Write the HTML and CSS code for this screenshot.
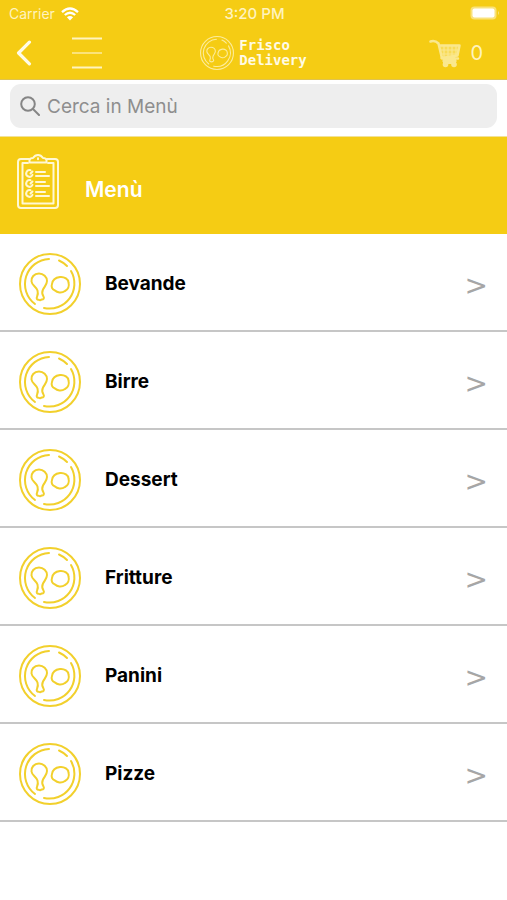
FILE: index.html
```html
<!DOCTYPE html>
<html lang="it">
<head>
    <meta charset="UTF-8">
    <meta name="viewport" content="width=device-width, initial-scale=1.0">
    <title>Menù - Frisco Delivery</title>
    <link rel="stylesheet" href="styles.css">
</head>
<body>
    <svg class="sprite" aria-hidden="true">
        <symbol id="plate" viewBox="0 0 62 62">
            <circle cx="31" cy="31" r="30"/>
            <path d="M30 6A25 25 0 0 0 16 51"/>
            <path d="M25 55A25 25 0 0 0 52 18"/>
            <path d="M40 7.500Q44.500 9.500 48 13"/>
            <path d="M20 20.500c-5 0-8 4-7.500 8 .5 4 4.500 5 6 9 .8 2.500.5 4-.5 6.500-.8 1.500 0 3 1.800 2.700 1 .8 2 .5 2.700-.2 2 .3 3-1.500 2-3-1.700-2.500-2-4-.5-7 1.500-3 4-5 4-8.500 0-4-3.500-7.500-8-7.500z"/>
            <path d="M41 24c4.500-.5 8.500 2.500 8.500 5.500 1 3.500-.5 7-3.500 8.500-3.500 2.500-8 1.500-10-.5-3-1-4-4-3-6.500.5-4 4-6.500 8-7z"/>
        </symbol>
    </svg>

    <header class="top">
        <div class="status-bar">
            <div class="carrier">
                <span>Carrier</span>
                <svg class="wifi" viewBox="0 0 18 14" aria-hidden="true">
                    <path d="M1 5.200Q9-2.200 17 5.200M3.800 8Q9 3.400 14.200 8" fill="none" stroke="currentColor" stroke-width="2.300"/>
                    <path d="M5.900 10.300Q9 7.700 12.100 10.300L9 13.600z" fill="currentColor"/>
                </svg>
            </div>
            <span class="time">3:20 PM</span>
            <svg class="battery" viewBox="0 0 30 15" aria-hidden="true">
                <rect x="0.500" y="0.500" width="26" height="13" rx="4" fill="#f9e27c"/>
                <rect x="2.500" y="2.500" width="22" height="9" rx="2" fill="#fff"/>
                <path d="M28 5q2 2 0 4z" fill="#f9e27c"/>
            </svg>
        </div>

        <nav class="nav-bar">
            <div class="nav-left">
                <button class="icon-btn" type="button" aria-label="Indietro">
                    <svg class="back" viewBox="0 0 14 24"><path d="M12 2L2 12l10 10"/></svg>
                </button>
                <button class="icon-btn" type="button" aria-label="Apri menu">
                    <svg class="burger" viewBox="0 0 30 32">
                        <path d="M0 1.500h30M0 30.500h30"/>
                        <path d="M0 16h30" opacity="0.600"/>
                    </svg>
                </button>
            </div>
            <a class="logo" href="#">
                <svg class="logo-plate" aria-hidden="true"><use href="#plate"/></svg>
                <span>Frisco<br>Delivery</span>
            </a>
            <button class="icon-btn cart" type="button" aria-label="Carrello">
                <svg class="cart-icon" viewBox="0 0 32 29" aria-hidden="true">
                    <path d="M1.500 2.500Q6 1 9.500 4.500L13 19.500H29M10 6.500H30.500L28.500 16.500L12.500 19" fill="none" stroke="currentColor" stroke-width="2.500" stroke-linecap="round" stroke-linejoin="round"/>
                    <path d="M10 7H30L28.500 16.500L12 18z" fill="currentColor" opacity="0.550"/>
                    <path d="M15 7v11M19 7v11M23 7v11M27 7v10M11 11h18M12 15h17M13 22h15" fill="none" stroke="currentColor" stroke-width="1.200"/>
                    <path d="M14 20h13v5H14z" fill="currentColor"/>
                    <circle cx="16.500" cy="25.500" r="2.800" fill="currentColor"/>
                    <circle cx="25" cy="25.500" r="2.800" fill="currentColor"/>
                </svg>
                <span>0</span>
            </button>
        </nav>
    </header>

    <form class="search">
        <label class="search-field">
            <svg class="search-icon" viewBox="0 0 20 20" aria-hidden="true"><circle cx="8" cy="8" r="6.800"/><path d="M13 13l6 6"/></svg>
            <input type="text" name="q" placeholder="Cerca in Menù" aria-label="Cerca in Menù">
        </label>
    </form>

    <main>
        <div class="section-title">
            <svg class="clipboard" viewBox="0 0 42 55" aria-hidden="true">
                <path d="M12 5H4Q1 5 1 8V51Q1 54 4 54H38Q41 54 41 51V8Q41 5 38 5H30"/>
                <path d="M11 9H5.500V49.500H36.500V9H31"/>
                <path d="M12.500 8.500V6Q13 4 16 4Q18 1 21 1T26 4Q29 4 29.500 6V8.500z"/>
                <path d="M21 4.200v1"/>
                <path d="M13.500 16.300a3.300 3.300 0 1 0 2 4.500M13.500 26.300a3.300 3.300 0 1 0 2 4.500M13.500 36.300a3.300 3.300 0 1 0 2 4.500M15.500 17.500l-2 2M15.500 27.500l-2 2M15.500 37.500l-2 2"/>
                <path d="M19 18h9M19 22h13M19 28h9M19 32h13M19 38h9M19 42h13"/>
            </svg>
            <h1>Menù</h1>
        </div>

        <ul class="categories">
            <li><a class="category" href="#">
                <svg class="plate" aria-hidden="true"><use href="#plate"/></svg>
                <span class="name">Bevande</span>
                <span class="arrow">&gt;</span>
            </a></li>
            <li><a class="category" href="#">
                <svg class="plate" aria-hidden="true"><use href="#plate"/></svg>
                <span class="name">Birre</span>
                <span class="arrow">&gt;</span>
            </a></li>
            <li><a class="category" href="#">
                <svg class="plate" aria-hidden="true"><use href="#plate"/></svg>
                <span class="name">Dessert</span>
                <span class="arrow">&gt;</span>
            </a></li>
            <li><a class="category" href="#">
                <svg class="plate" aria-hidden="true"><use href="#plate"/></svg>
                <span class="name">Fritture</span>
                <span class="arrow">&gt;</span>
            </a></li>
            <li><a class="category" href="#">
                <svg class="plate" aria-hidden="true"><use href="#plate"/></svg>
                <span class="name">Panini</span>
                <span class="arrow">&gt;</span>
            </a></li>
            <li><a class="category" href="#">
                <svg class="plate" aria-hidden="true"><use href="#plate"/></svg>
                <span class="name">Pizze</span>
                <span class="arrow">&gt;</span>
            </a></li>
        </ul>
    </main>
</body>
</html>
```
FILE: styles.css
```css
* {
    margin: 0;
    padding: 0;
    box-sizing: border-box;
}

:root {
    --yellow: #f5cc14;
    --cream: #fff3bf;
    --line: #c6c6c6;
}

body {
    font-family: Inter, "Noto Sans", sans-serif;
    background: #fff;
    color: #000;
}

svg {
    display: block;
    flex: none;
}

a {
    color: inherit;
    text-decoration: none;
}

.sprite {
    position: absolute;
    width: 0;
    height: 0;
}

#plate {
    fill: none;
    stroke: currentColor;
    stroke-linecap: round;
    stroke-linejoin: round;
}

/* Status bar + navigation */
.top {
    background: var(--yellow);
    border-bottom: 1px solid #dfc350;
    color: var(--cream);
}

.status-bar,
.nav-bar {
    display: grid;
    grid-template-columns: 1fr auto 1fr;
    align-items: center;
}

.status-bar {
    height: 27px;
    padding: 0 7px 0 9px;
    font-size: 14px;
}

.carrier {
    display: flex;
    align-items: center;
    gap: 6px;
}

.wifi {
    width: 18px;
    height: 14px;
    color: #fff;
}

.time {
    font-size: 15px;
    font-weight: 500;
}

.battery {
    width: 30px;
    height: 15px;
    justify-self: end;
}

.nav-bar {
    height: 52px;
    padding: 0 16px;
}

.nav-left {
    display: flex;
    align-items: center;
    gap: 40px;
}

.icon-btn {
    border: none;
    background: none;
    color: inherit;
    font: inherit;
    cursor: pointer;
}

.back {
    width: 16px;
    height: 26px;
    fill: none;
    stroke: #fffbe6;
    stroke-width: 3;
    stroke-linecap: round;
    stroke-linejoin: round;
}

.burger {
    width: 30px;
    height: 32px;
    stroke: currentColor;
    stroke-width: 2;
}

.logo {
    display: flex;
    align-items: center;
    gap: 5px;
    font: bold 14px/15px "DejaVu Sans Mono", monospace;
    color: #fffbe6;
}

.logo-plate {
    width: 34px;
    height: 34px;
    stroke-width: 2;
    color: #fcec9c;
}

.cart {
    display: flex;
    align-items: center;
    justify-self: end;
    gap: 9px;
    padding-right: 8px;
    font-size: 20px;
}

.cart-icon {
    width: 32px;
    height: 29px;
    color: #fae88e;
}

/* Search */
.search {
    padding: 4px 10px 8px;
    border-bottom: 1px solid #f2e298;
}

.search-field {
    display: flex;
    align-items: center;
    gap: 7px;
    height: 44px;
    padding: 0 10px;
    border-radius: 11px;
    background: #eee;
}

.search-icon {
    width: 20px;
    height: 20px;
    fill: none;
    stroke: #858585;
    stroke-width: 2;
    stroke-linecap: round;
}

.search-field input {
    flex: 1;
    min-width: 0;
    border: none;
    outline: none;
    background: none;
    font: 19px Inter, sans-serif;
}

.search-field input::placeholder {
    color: #8e8e8e;
}

/* Section title */
.section-title {
    display: flex;
    align-items: flex-start;
    gap: 26px;
    height: 97px;
    padding: 17px;
    background: var(--yellow);
    color: #fff;
}

.clipboard {
    width: 42px;
    height: 55px;
    fill: none;
    stroke: #fff8d4;
    stroke-width: 2;
    stroke-linecap: round;
    stroke-linejoin: round;
}

.section-title h1 {
    padding-top: 22px;
    font-size: 21px;
    font-weight: 600;
    line-height: 28px;
}

/* Categories */
.categories {
    list-style: none;
}

.category {
    display: flex;
    align-items: center;
    height: 98px;
    padding: 3px 19px 0;
    border-bottom: 2px solid var(--line);
}

.plate {
    width: 62px;
    height: 62px;
    margin-right: 24px;
    color: #f2d02c;
    stroke-width: 2;
}

.name {
    flex: 1;
    font-size: 19px;
    font-weight: 700;
}

.arrow {
    padding-top: 3px;
    font: 28px "DejaVu Sans", sans-serif;
    color: #a6a6a6;
}
```
